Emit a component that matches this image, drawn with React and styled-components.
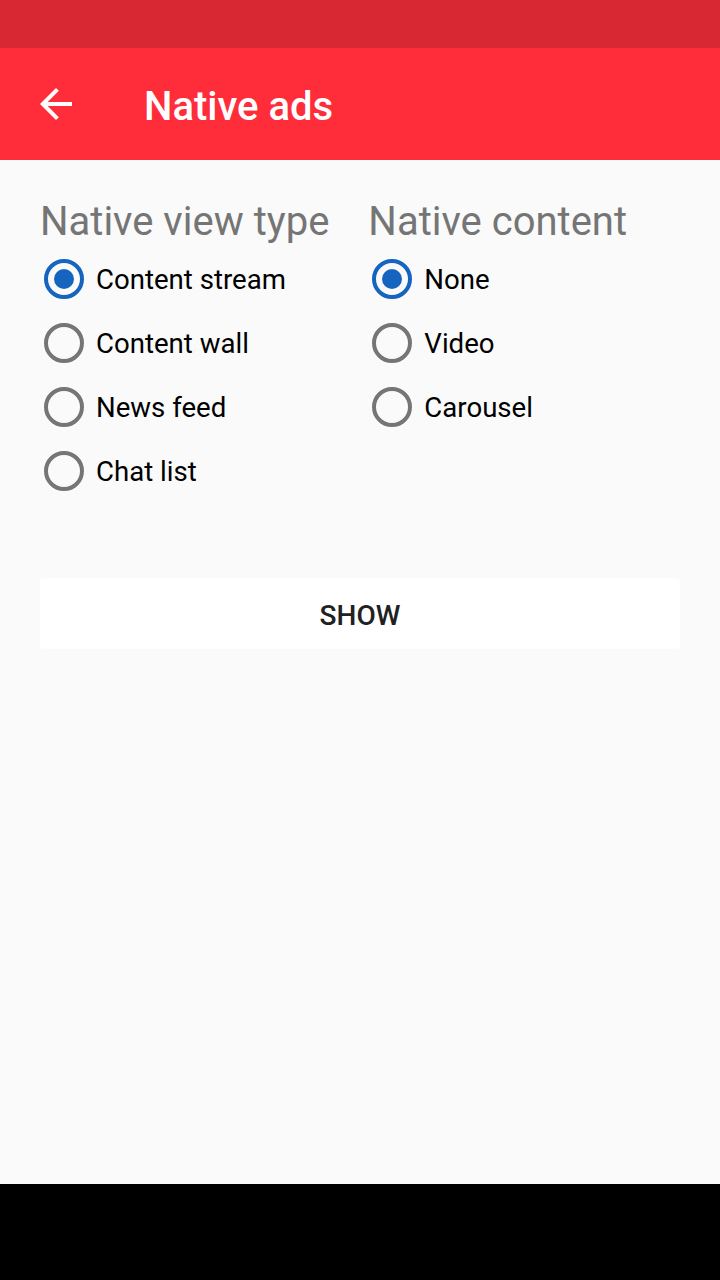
import React, { useState } from 'react'
import styled, { createGlobalStyle } from 'styled-components'

const Global = createGlobalStyle`
  html, body {
    margin: 0;
    padding: 0;
    background: #000;
  }
  * { box-sizing: border-box; }
`

const viewTypes = ['Content stream', 'Content wall', 'News feed', 'Chat list']
const contents = ['None', 'Video', 'Carousel']

const RadioGroup = ({ title, options, value, onChange }) => (
  <Column>
    <Heading>{title}</Heading>
    {options.map(opt => (
      <Option key={opt} onClick={() => onChange(opt)}>
        <Ring checked={opt === value} />
        <Label>{opt}</Label>
      </Option>
    ))}
  </Column>
)

const App = () => {
  const [viewType, setViewType] = useState('Content stream')
  const [content, setContent] = useState('None')

  return (
    <Screen>
      <Global />
      <StatusBar />
      <Toolbar>
        <BackButton aria-label="Back">
          <svg width="48" height="48" viewBox="0 0 24 24" fill="#fff">
            <path d="M20 11H7.83l5.59-5.59L12 4l-8 8 8 8 1.41-1.41L7.83 13H20v-2z" />
          </svg>
        </BackButton>
        <Title>Native ads</Title>
      </Toolbar>
      <Content>
        <Groups>
          <RadioGroup title="Native view type" options={viewTypes} value={viewType} onChange={setViewType} />
          <RadioGroup title="Native content" options={contents} value={content} onChange={setContent} />
        </Groups>
        <ShowButton>SHOW</ShowButton>
      </Content>
      <NavBar />
    </Screen>
  )
}

export default App

const Screen = styled.div`
  width: 720px;
  height: 1280px;
  display: flex;
  flex-direction: column;
  background: #fafafa;
  font-family: Roboto, "Noto Sans", sans-serif;
`

const StatusBar = styled.div`
  height: 48px;
  background: #d72834;
`

const Toolbar = styled.div`
  height: 112px;
  background: #ff2d3a;
  display: flex;
  align-items: center;
  padding-left: 32px;
`

const BackButton = styled.div`
  width: 48px;
  height: 48px;
  display: flex;
`

const Title = styled.h1`
  margin: 4px 0 0 64px;
  color: #fff;
  font-size: 40px;
  font-weight: 500;
`

const Content = styled.div`
  flex: 1;
  padding: 38px 40px 0;
  display: flex;
  flex-direction: column;
`

const Groups = styled.div`
  display: flex;
  gap: 39px;
`

const Column = styled.div`
  display: flex;
  flex-direction: column;
`

const Heading = styled.div`
  font-size: 40px;
  line-height: 47px;
  color: #757575;
  margin-bottom: 2px;
`

const Option = styled.div`
  height: 64px;
  display: flex;
  align-items: center;
  cursor: pointer;
`

const Ring = styled.span`
  width: 40px;
  height: 40px;
  margin-left: 4px;
  border-radius: 50%;
  border: 4px solid ${p => (p.checked ? '#1565c0' : '#757575')};
  display: flex;
  align-items: center;
  justify-content: center;

  &::after {
    content: '';
    width: 20px;
    height: 20px;
    border-radius: 50%;
    background: ${p => (p.checked ? '#1565c0' : 'transparent')};
  }
`

const Label = styled.span`
  margin-left: 12px;
  font-size: 27.6px;
  color: #000;
`

const ShowButton = styled.div`
  margin-top: 75px;
  height: 71px;
  padding-top: 3px;
  background: #fff;
  border-radius: 4px;
  display: flex;
  align-items: center;
  justify-content: center;
  font-size: 28px;
  font-weight: 500;
  color: #212121;
`

const NavBar = styled.div`
  height: 96px;
  background: #000;
`
